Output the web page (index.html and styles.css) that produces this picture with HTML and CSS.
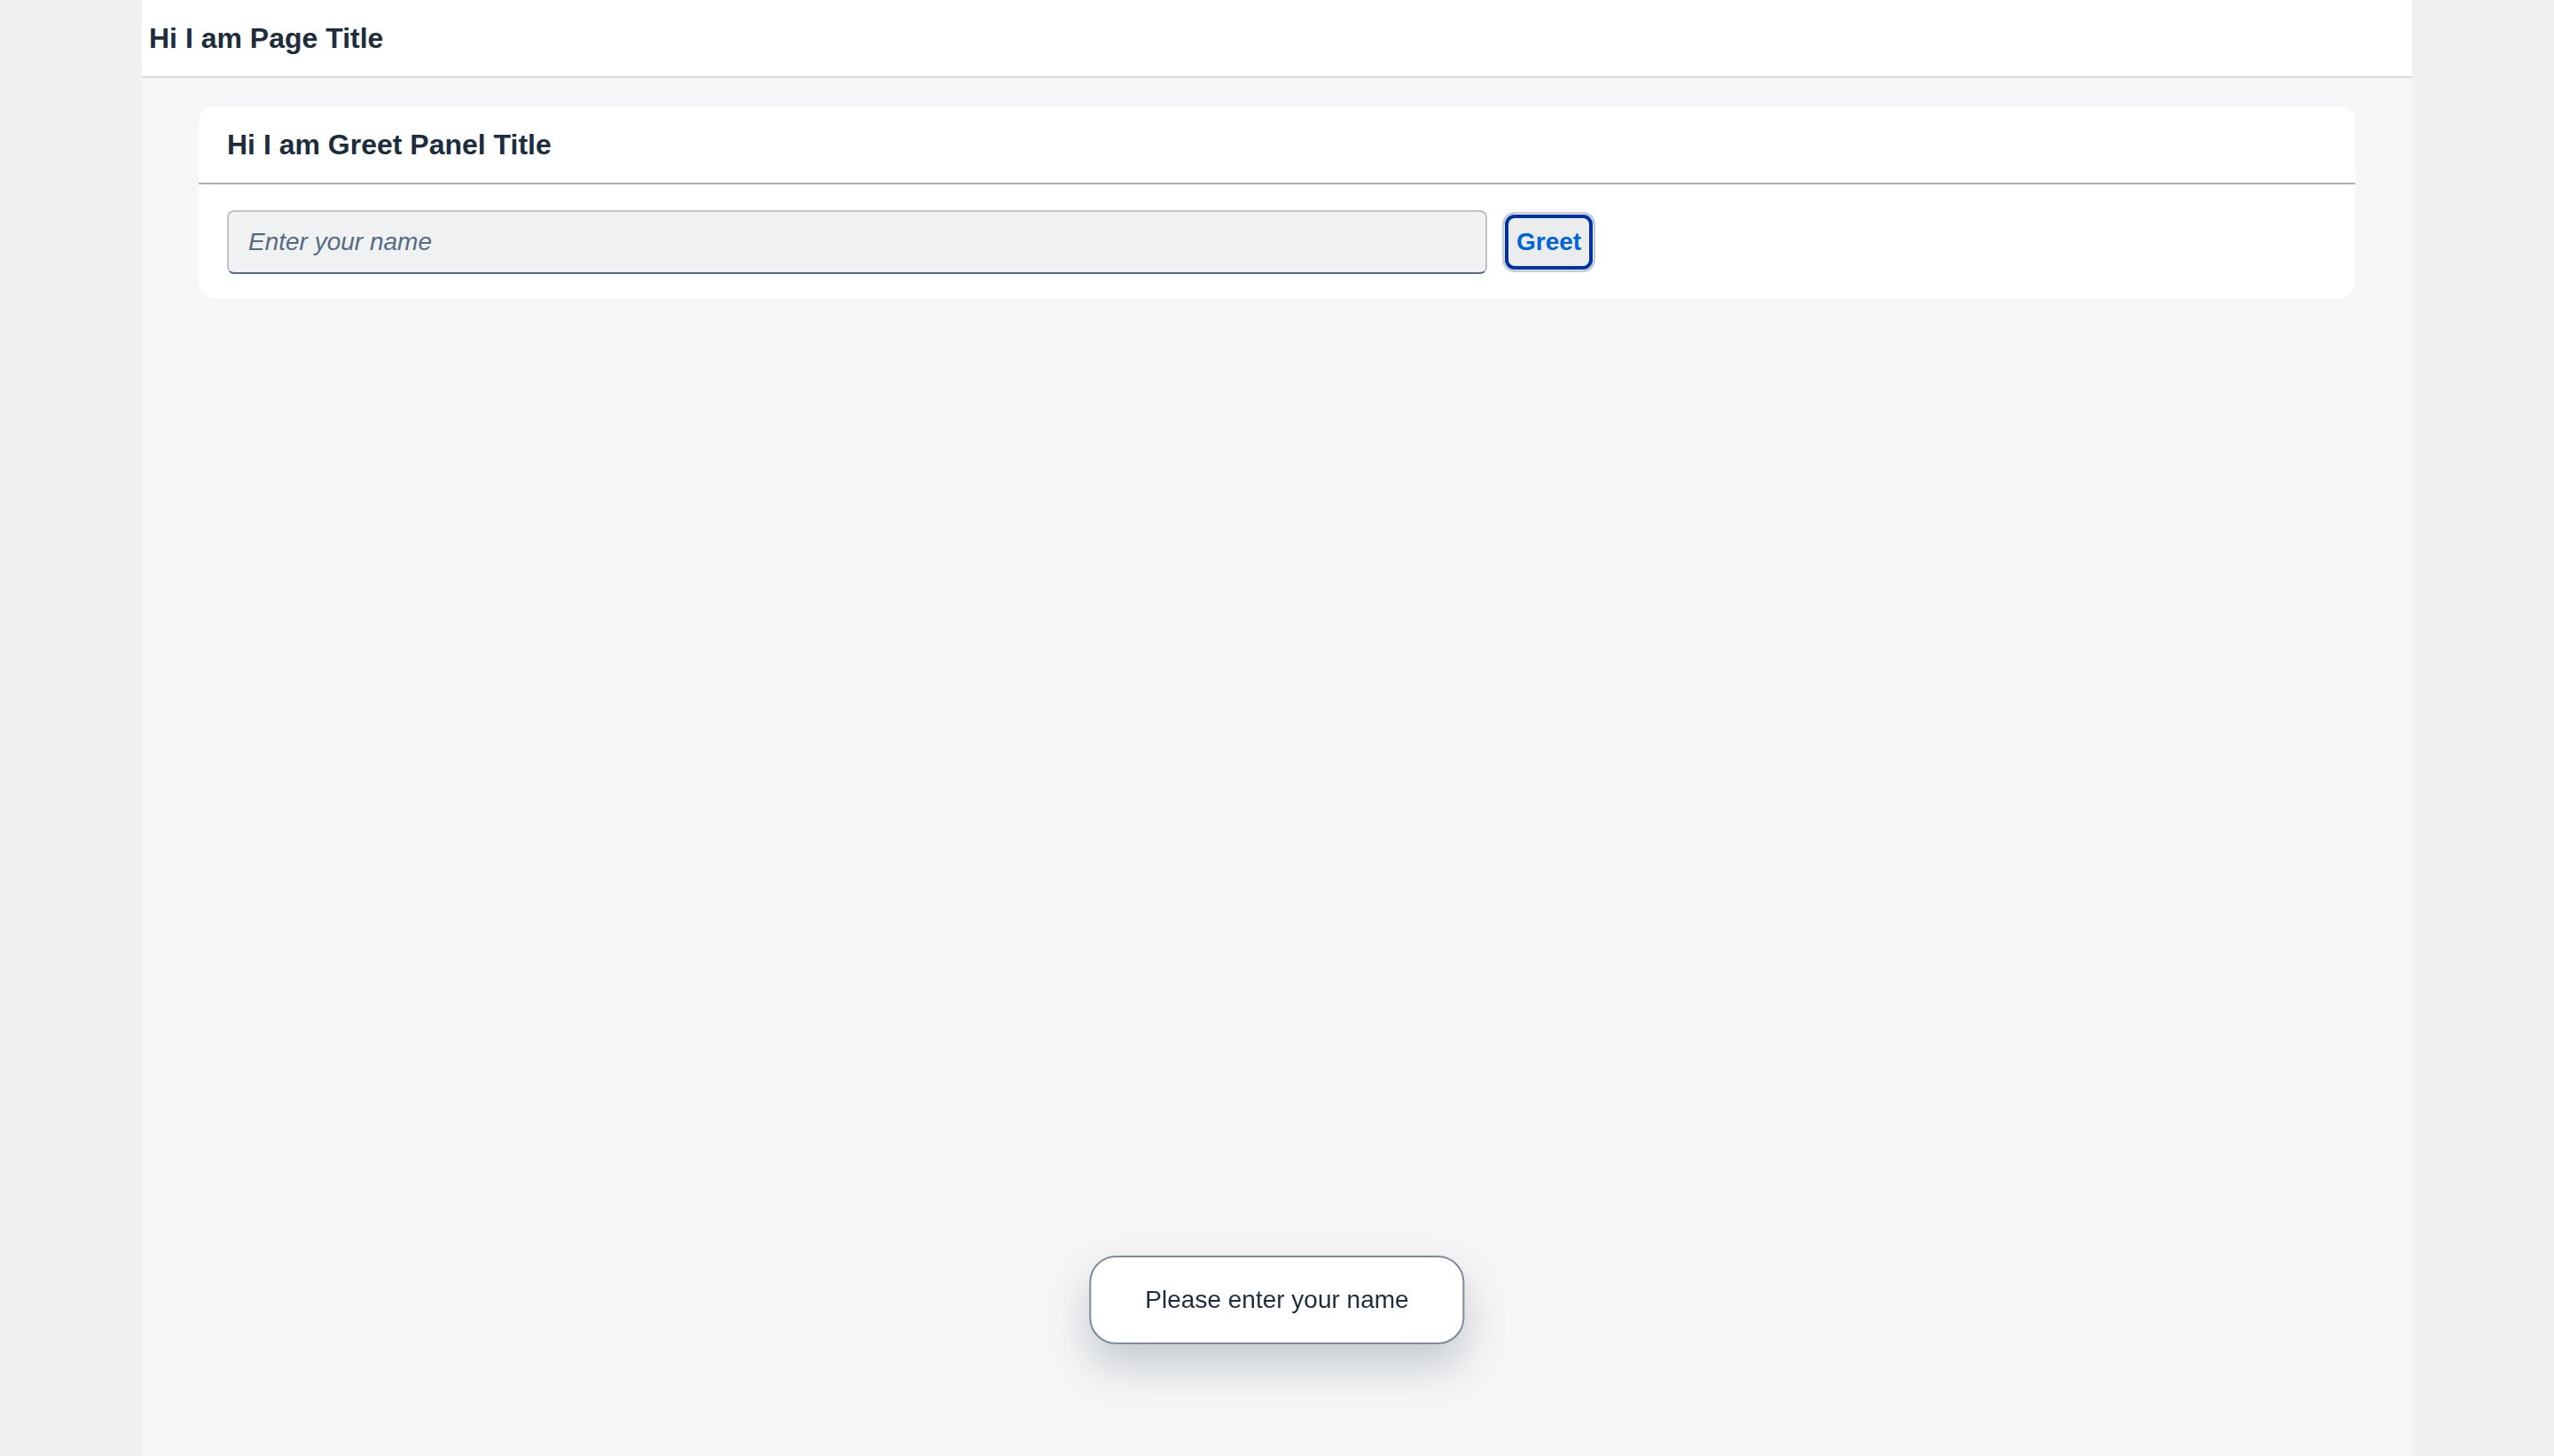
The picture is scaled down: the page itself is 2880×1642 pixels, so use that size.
FILE: index.html
```html
<!DOCTYPE html>
<html lang="en">
<head>
  <meta charset="UTF-8">
  <meta name="viewport" content="width=device-width, initial-scale=1.0">
  <title>Hi I am Page Title</title>
  <link rel="stylesheet" href="styles.css">
</head>
<body>
  <div class="app">
    <!-- Page header -->
    <header class="page-header">
      <h1>Hi I am Page Title</h1>
    </header>

    <!-- Page content -->
    <main class="page-content">
      <section class="panel">
        <div class="panel-header">
          <h2>Hi I am Greet Panel Title</h2>
        </div>
        <div class="panel-content">
          <input type="text" class="name-input" placeholder="Enter your name">
          <button class="greet-button" onclick="greet()">Greet</button>
        </div>
      </section>
    </main>
  </div>

  <!-- Message toast -->
  <div id="toast" class="toast">Please enter your name</div>

  <script>
    function greet() {
      const name = document.querySelector('.name-input').value.trim();
      const toast = document.getElementById('toast');
      toast.textContent = name ? `Hello ${name}` : 'Please enter your name';
      toast.style.display = 'block';
    }
  </script>
</body>
</html>
```

FILE: styles.css
```css
body {
  margin: 0;
  padding: 0;
  font-family: "Liberation Sans", Arial, sans-serif;
  color: #1d2d3e;
  background-color: #eff0f2; /* area outside the app */
}
.app {
  max-width: 2560px;
  min-height: 100vh;
  margin: 0 auto;
  background-color: #f5f6f7;
}
.page-header {
  height: 86px;
  display: flex;
  align-items: center;
  padding-left: 8px;
  background: #fff;
  border-bottom: 2px solid #d9d9d9;
}
.page-header h1 {
  margin: 0;
  font-size: 32px;
  font-weight: bold;
}
.page-content {
  padding: 32px 64px;
}
.panel {
  background: #fff;
  border-radius: 18px;
}
.panel-header {
  height: 86px;
  display: flex;
  align-items: center;
  padding: 0 32px;
  border-bottom: 2px solid #a8b2bd;
}
.panel-header h2 {
  margin: 0;
  font-size: 32px;
  font-weight: bold;
}
.panel-content {
  display: flex;
  align-items: center;
  gap: 17px;
  padding: 29px 32px 27px;
}
.name-input {
  width: 1421px;
  height: 72px;
  box-sizing: border-box;
  padding: 0 22px;
  font-family: inherit;
  font-size: 28px;
  color: #1d2d3e;
  background: #eff1f2;
  border: 2px solid #bcc3ca;
  border-bottom-color: #556b81;
  border-radius: 8px;
  outline: none;
}
.name-input::placeholder {
  font-style: italic;
  color: #556b82;
}
.greet-button {
  height: 68px;
  padding: 0 14px;
  font-family: inherit;
  font-size: 28px;
  font-weight: bold;
  color: #0064d9;
  background: #eaecee;
  border: 2px solid #c6ccd3;
  border-radius: 14px;
  box-shadow: inset 0 0 0 1px #eaecee, inset 0 0 0 5px #0032a5; /* focus ring */
  cursor: pointer;
}
.toast {
  position: fixed;
  left: 50%;
  bottom: 126px;
  transform: translateX(-50%);
  padding: 32px 61px;
  font-size: 28px;
  line-height: 32px;
  white-space: nowrap;
  background: #fff;
  border: 2px solid #7f8b98;
  border-radius: 30px;
  box-shadow: 0 24px 48px rgba(29, 45, 62, 0.22);
}
```
